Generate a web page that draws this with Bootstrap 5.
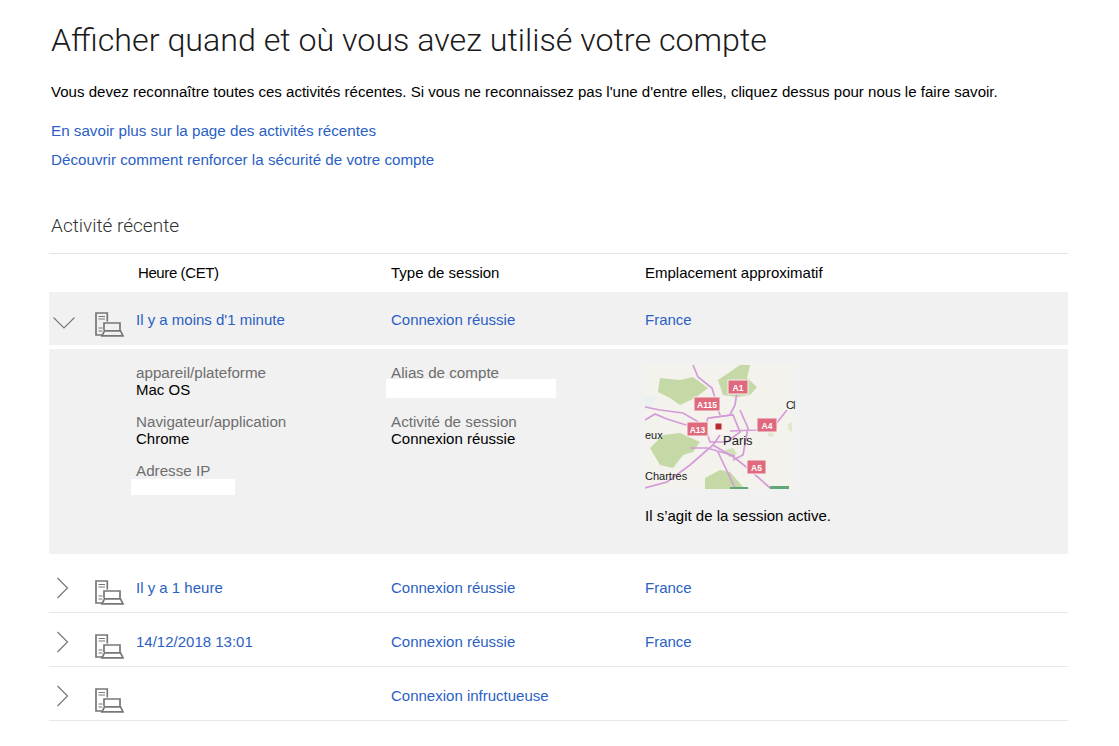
<!DOCTYPE html>
<html lang="fr">
<head>
<meta charset="utf-8">
<title>Activité récente</title>
<link href="https://cdn.jsdelivr.net/npm/bootstrap@5.3.0/dist/css/bootstrap.min.css" rel="stylesheet">
<style>
html,body{background:#fff;overflow:hidden}
body{font-family:"Liberation Sans",Arial,sans-serif;font-size:15px;color:#000;line-height:17px}
a{color:#2b5fc4;text-decoration:none}
.page-wrap{padding:20px 51px 0 49px}
.page-title{font-family:Roboto,sans-serif;font-weight:300;font-size:32.2px;line-height:40px;margin:0 0 0 2px;color:#1a1a1a}
.intro{margin:23px 0 0 2px;font-size:15.06px}
.lnk{margin:22px 0 0 2px;font-size:15.2px}
.lnk + .lnk{margin-top:12px}
.sec-title{font-family:Roboto,sans-serif;font-weight:300;font-size:19px;line-height:24px;margin:46px 0 0 2px;color:#333}
.activity{margin-top:15px;border-top:1px solid #e4e4e4}
.head-row,.act-row{display:flex;align-items:center}
.head-row{height:38px;padding-bottom:1px}
.head-time{letter-spacing:-.4px}
.act-row{height:54px;padding-top:4px;border-bottom:1px solid #e8e8e8}
.act-row.open{height:53px;padding-top:1px;background:#f1f1f1;border:0}
.c-chev{width:46px;flex:none;padding-left:8px}
.open .c-chev{padding-left:4px}
.c-ico{width:41px;flex:none}
.c-a{width:255px;flex:none}
.c-b{width:254px;flex:none}
.head-row .c-a{padding-left:2px}
.detail{margin-top:4px;height:205px;background:#f1f1f1;margin-bottom:5px;padding:15px 0 0 87px;display:flex}
.d-col{flex:none}
.d-col.one{width:255px}
.d-col.two{width:254px}
.lab{color:#6e6e6e;display:block;font-size:15.2px}
.val{display:block;margin-bottom:15px}
.redact{display:block;background:#fff}
.redact.ip{width:104px;margin-left:-5px;height:16px}
.redact.alias{width:170px;margin-left:-5px;height:19px;margin-top:-2px;margin-bottom:15px}
.map-svg{display:block}
.sess{margin-top:18px}
.map-svg text{font-family:"Liberation Sans",sans-serif}
.row-ic{display:block}
.dev-ic{display:block;margin-top:9px}
.open .dev-ic{margin-top:11px}
.open .row-ic{margin-top:7px}
</style>
</head>
<body>
<main class="page-wrap">
<h1 class="page-title">Afficher quand et où vous avez utilisé votre compte</h1>
<p class="intro">Vous devez reconnaître toutes ces activités récentes. Si vous ne reconnaissez pas l'une d'entre elles, cliquez dessus pour nous le faire savoir.</p>
<p class="lnk"><a href="#">En savoir plus sur la page des activités récentes</a></p>
<p class="lnk mb-0"><a href="#">Découvrir comment renforcer la sécurité de votre compte</a></p>
<h2 class="sec-title">Activité récente</h2>
<div class="activity">
  <div class="head-row">
    <div class="c-chev"></div><div class="c-ico"></div>
    <div class="c-a head-time">Heure (CET)</div><div class="c-b">Type de session</div><div>Emplacement approximatif</div>
  </div>
  <div class="act-row open">
    <div class="c-chev"><svg class="row-ic" width="22" height="12" viewBox="0 0 22 12"><path d="M.5.5 11 11 21.500.5" fill="none" stroke="#777" stroke-width="1.1"/></svg></div>
    <div class="c-ico"><svg class="dev-ic" width="29" height="25" viewBox="0 0 29 25"><use href="#dev"/></svg></div>
    <div class="c-a"><a href="#">Il y a moins d'1 minute</a></div><div class="c-b"><a href="#">Connexion réussie</a></div><div><a href="#">France</a></div>
  </div>
  <div class="detail">
    <div class="d-col one">
      <span class="lab">appareil/plateforme</span><span class="val">Mac OS</span>
      <span class="lab">Navigateur/application</span><span class="val">Chrome</span>
      <span class="lab">Adresse IP</span><span class="redact ip"></span>
    </div>
    <div class="d-col two">
      <span class="lab">Alias de compte</span><span class="redact alias"></span>
      <span class="lab">Activité de session</span><span class="val">Connexion réussie</span>
    </div>
    <div class="d-col">
      <svg class="map-svg" width="153" height="125" viewBox="0 0 153 125">
        <rect width="149" height="125" fill="#f3f2ec"/>
        <path d="M15 14 35 16 48 13 63 24 50 34 35 41 25 34 13 28Z" fill="#c4d9a6"/>
        <path d="M73 16 85 8 95 1 105 1 102 14 112 23 105 31 92 33 78 31Z" fill="#c4d9a6"/>
        <path d="M18 71 35 69 55 78 48 88 38 91 28 104 15 101 5 84Z" fill="#c4d9a6"/>
        <path d="M60 114 75 106 85 108 98 123 105 125H60Z" fill="#c4d9a6"/>
        <path d="M80 86 88 84 92 90 84 93Z" fill="#d0e0b8"/>
        <path d="M122 68 127 64 129 72 124 73ZM143 60 147 58 147 68 143 66Z" fill="#dfe8cf"/>
        <path d="M0 34 11 32 6 44 0 43Z" fill="#e8f1f2"/>
        <g fill="none" stroke="#d49bd9" stroke-width="1.7">
          <path d="M48 1 53 13 67 24 75 51"/>
          <path d="M92 28 90 41 85 51 65 54"/>
          <path d="M0 43 15 46 38 49 62 63"/>
          <path d="M0 56 10 50 22 55 38 60 60 66"/>
          <path d="M85 67 112 66 130 61 142 46"/>
          <path d="M68 81 90 94 105 106 125 124"/>
          <path d="M0 124 22 118 45 101 68 81 75 71"/>
          <path d="M63 54 88 51 95 68 82 78 65 78 60 63Z"/>
          <path d="M95 46 103 64 98 91 88 96"/>
          <path d="M73 88 90 124"/>
          <path d="M45 84 62 84 90 92"/>
        </g>
        <g fill="#e0697e" stroke="#f3f2ec" stroke-width="1">
          <rect x="83" y="16" width="20" height="14"/><rect x="49" y="33" width="26" height="14"/>
          <rect x="42" y="58" width="21" height="14"/><rect x="112" y="54" width="20" height="14"/>
          <rect x="102" y="96" width="19" height="14"/>
        </g>
        <rect x="125" y="122" width="19" height="3" fill="#5fa877"/>
        <rect x="85" y="123" width="18" height="2" fill="#5fa877"/>
        <g fill="#fff" font-size="8.500" font-weight="700" text-anchor="middle">
          <text x="93" y="26.500">A1</text><text x="62" y="43.500">A115</text><text x="52.500" y="68.500">A13</text><text x="122" y="64.500">A4</text><text x="111.500" y="106.500">A5</text>
        </g>
        <rect x="67" y="56" width="14" height="14" fill="#f8f3ee"/>
        <rect x="70.500" y="59.500" width="6" height="6" fill="#b62b30"/>
        <g fill="#222" font-size="11">
          <text x="78" y="80.500" font-size="13">Paris</text><text x="141" y="45" letter-spacing="-1">Cl</text><text x="0" y="75">eux</text><text x="0" y="116">Chartres</text>
        </g>
      </svg>
      <p class="sess mb-0">Il s’agit de la session active.</p>
    </div>
  </div>
  <div class="act-row">
    <div class="c-chev"><svg class="row-ic" width="12" height="22" viewBox="0 0 12 22"><path d="M.5 1 10.500 11 .5 21" fill="none" stroke="#777" stroke-width="1.2"/></svg></div>
    <div class="c-ico"><svg class="dev-ic" width="29" height="25" viewBox="0 0 29 25"><use href="#dev"/></svg></div>
    <div class="c-a"><a href="#">Il y a 1 heure</a></div><div class="c-b"><a href="#">Connexion réussie</a></div><div><a href="#">France</a></div>
  </div>
  <div class="act-row">
    <div class="c-chev"><svg class="row-ic" width="12" height="22" viewBox="0 0 12 22"><path d="M.5 1 10.500 11 .5 21" fill="none" stroke="#777" stroke-width="1.2"/></svg></div>
    <div class="c-ico"><svg class="dev-ic" width="29" height="25" viewBox="0 0 29 25"><use href="#dev"/></svg></div>
    <div class="c-a"><a href="#">14/12/2018 13:01</a></div><div class="c-b"><a href="#">Connexion réussie</a></div><div><a href="#">France</a></div>
  </div>
  <div class="act-row">
    <div class="c-chev"><svg class="row-ic" width="12" height="22" viewBox="0 0 12 22"><path d="M.5 1 10.500 11 .5 21" fill="none" stroke="#777" stroke-width="1.2"/></svg></div>
    <div class="c-ico"><svg class="dev-ic" width="29" height="25" viewBox="0 0 29 25"><use href="#dev"/></svg></div>
    <div class="c-a"></div><div class="c-b"><a href="#">Connexion infructueuse</a></div><div></div>
  </div>
</div>
</main>
<svg width="0" height="0" class="position-absolute"><defs>
  <g id="dev" fill="none" stroke="#777" stroke-width="1.700">
    <path d="M12.300 9.500V1H1V23H7"/>
    <path d="M3.500 4.500H10M3.500 7H10M3.500 16H7.500M3.500 19H7.500" stroke-width="1.200"/>
    <path d="M9 18V11H25V18"/>
    <path d="M7 23.800H28L25.500 18.800H9.500Z"/>
  </g>
</defs></svg>
<script src="https://cdn.jsdelivr.net/npm/bootstrap@5.3.0/dist/js/bootstrap.bundle.min.js"></script>
</body>
</html>
